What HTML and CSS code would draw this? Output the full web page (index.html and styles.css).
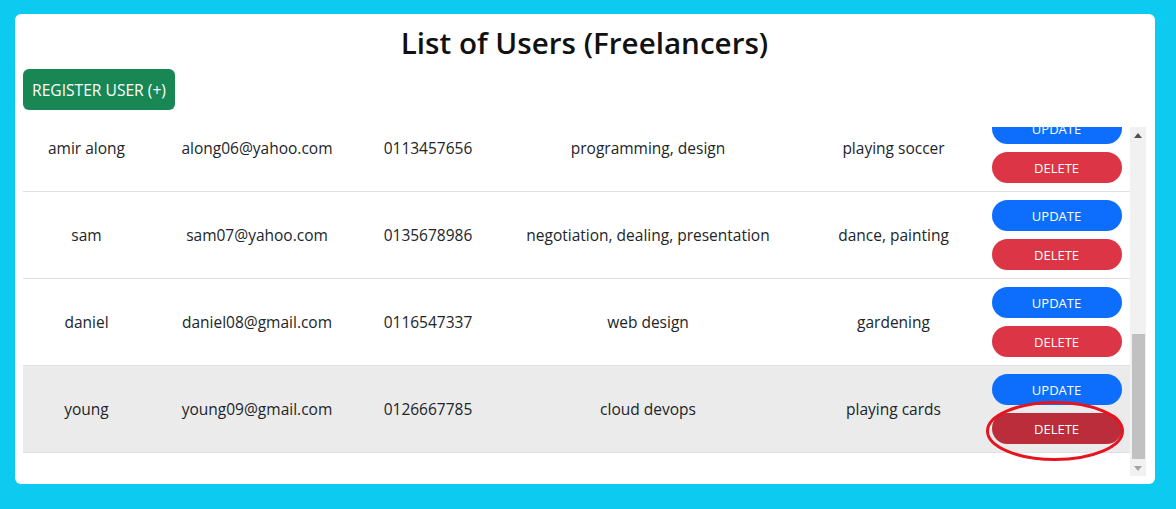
FILE: index.html
```html
<!DOCTYPE html>
<html lang="en">
<head>
<meta charset="utf-8">
<title>List of Users (Freelancers)</title>
<link rel="stylesheet" href="styles.css">
</head>
<body>
<main class="card">
  <h2 class="title">List of Users (Freelancers)</h2>
  <div class="toolbar">
    <button class="btn btn-register">REGISTER USER (+)</button>
  </div>
  <div class="scroll-area">
    <div class="viewport">
      <div class="scroll-inner">
        <div class="spacer"></div>
        <table class="users">
          <colgroup>
            <col class="c-name"><col class="c-email"><col class="c-phone"><col class="c-skills"><col class="c-hobby"><col class="c-action">
          </colgroup>
          <tbody>
            <tr>
              <td>amir along</td><td>along06@yahoo.com</td><td>0113457656</td><td>programming, design</td><td>playing soccer</td>
              <td><div class="actions"><button class="pill pill-update">UPDATE</button><button class="pill pill-delete">DELETE</button></div></td>
            </tr>
            <tr>
              <td>sam</td><td>sam07@yahoo.com</td><td>0135678986</td><td>negotiation, dealing, presentation</td><td>dance, painting</td>
              <td><div class="actions"><button class="pill pill-update">UPDATE</button><button class="pill pill-delete">DELETE</button></div></td>
            </tr>
            <tr>
              <td>daniel</td><td>daniel08@gmail.com</td><td>0116547337</td><td>web design</td><td>gardening</td>
              <td><div class="actions"><button class="pill pill-update">UPDATE</button><button class="pill pill-delete">DELETE</button></div></td>
            </tr>
            <tr class="hovered">
              <td>young</td><td>young09@gmail.com</td><td>0126667785</td><td>cloud devops</td><td>playing cards</td>
              <td><div class="actions"><button class="pill pill-update">UPDATE</button><span class="marked"><button class="pill pill-delete pill-delete-hover">DELETE</button><svg class="circle-mark" width="140" height="62" viewBox="0 0 140 62"><ellipse cx="70" cy="31" rx="67.5" ry="28.5" fill="none" stroke="#e5141f" stroke-width="3"/></svg></span></div></td>
            </tr>
          </tbody>
        </table>
        <div class="bottom-gap"></div>
      </div>
    </div>
    <div class="scrollbar" aria-hidden="true">
      <div class="sb-btn"><svg width="8" height="5" viewBox="0 0 8 5"><path d="M0 5 L4 0 L8 5 Z" fill="#505050"/></svg></div>
      <div class="sb-track"><div class="sb-thumb"></div></div>
      <div class="sb-btn"><svg width="8" height="5" viewBox="0 0 8 5"><path d="M0 0 L4 5 L8 0 Z" fill="#a3a3a3"/></svg></div>
    </div>
  </div>
</main>
</body>
</html>
```
FILE: styles.css
```css
html, body {
  margin: 0;
  padding: 0;
}
body {
  background: #0dcaf0;
  font-family: "Open Sans", "Noto Sans", sans-serif;
  color: #212529;
  height: 509px;
  overflow: hidden;
}
.card {
  box-sizing: border-box;
  margin: 14px 0 0 15px;
  width: 1140px;
  height: 470px;
  background: #fff;
  border-radius: 6px;
  padding: 0 9px 8px 8px;
  display: flex;
  flex-direction: column;
}
.title {
  margin: 0;
  height: 55px;
  display: flex;
  align-items: center;
  justify-content: center;
  font-size: 29.6px;
  font-weight: 600;
  color: #111;
  padding-top: 2px;
  box-sizing: border-box;
}
.toolbar {
  display: flex;
  height: 41px;
  margin-bottom: 17px;
}
.btn {
  font-family: inherit;
  border: 0;
  cursor: pointer;
}
.btn-register {
  width: 152px;
  height: 41px;
  background: #198754;
  color: #fff;
  font-size: 15.6px;
  border-radius: 6px;
  padding: 0;
}
.scroll-area {
  height: 349px;
  display: flex;
}
.viewport {
  flex: 1;
  overflow: hidden;
  display: flex;
  flex-direction: column-reverse;
}
.scroll-inner {
  flex-shrink: 0;
}
.spacer {
  height: 489px;
}
.bottom-gap {
  height: 23px;
}
.scrollbar {
  width: 16px;
  background: #f1f1f1;
  display: flex;
  flex-direction: column;
}
.sb-btn {
  height: 16px;
  display: flex;
  align-items: center;
  justify-content: center;
}
.sb-track {
  flex: 1;
  display: flex;
  flex-direction: column;
  justify-content: flex-end;
  padding: 0 1px 1px 2px;
}
.sb-thumb {
  height: 125px;
  background: #c1c1c1;
}
.users {
  width: 100%;
  border-collapse: collapse;
  table-layout: fixed;
  font-size: 15.5px;
}
.c-name { width: 127px; }
.c-email { width: 214px; }
.c-phone { width: 128px; }
.c-skills { width: 312px; }
.c-hobby { width: 179px; }
.c-action { width: 147px; }
.users td {
  height: 86px;
  padding: 0;
  text-align: center;
  vertical-align: middle;
  border-bottom: 1px solid #dee2e6;
  white-space: nowrap;
}
.users tr.hovered td {
  background: #ebebeb;
}
.actions {
  display: flex;
  flex-direction: column;
  align-items: center;
  gap: 8px;
}
.marked {
  position: relative;
  display: block;
  width: 130px;
  height: 31px;
}
.pill {
  width: 130px;
  height: 31px;
  border: 0;
  border-radius: 16px;
  color: #fff;
  font-family: inherit;
  font-size: 13px;
  padding: 0;
  display: block;
}
.pill-update { background: #0d6efd; }
.pill-delete { background: #dc3545; }
.pill-delete-hover { background: #bb2d3b; }
.circle-mark {
  position: absolute;
  left: -7px;
  top: -13px;
  pointer-events: none;
}
```
